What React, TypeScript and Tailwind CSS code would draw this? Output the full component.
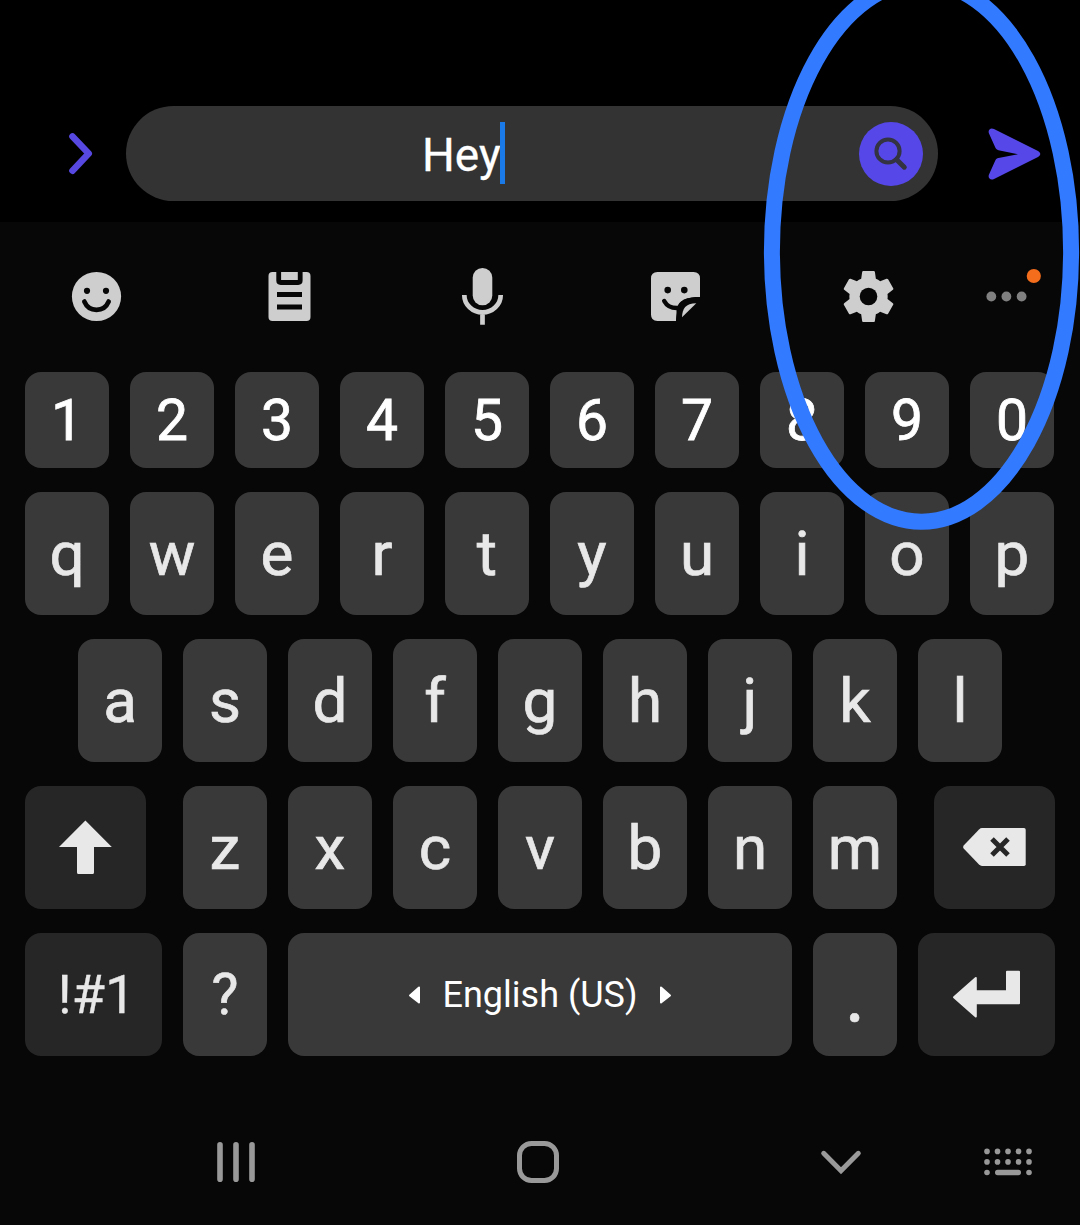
import type { ReactNode } from 'react';

const KEY = 'flex w-[84px] items-center justify-center rounded-2xl bg-[#393939] text-[#e8e8e8]';
const DARK = 'flex items-center justify-center rounded-2xl bg-[#262626] text-[#e8e8e8]';
const LETTER = 'pb-px text-[62px] [-webkit-text-stroke:0.7px_#e8e8e8]';

function Letters({ chars, className }: { chars: string; className: string }) {
  return (
    <>
      {chars.split('').map((c) => (
        <div key={c} className={`${KEY} ${className}`}>
          {c}
        </div>
      ))}
    </>
  );
}

function Tool({ x, children }: { x: number; children: ReactNode }) {
  return (
    <div className="flex w-[193px] justify-center">
      <svg width="65" height="64" viewBox={`${x - 32.5} 265 65 64`} className="text-[#cecece]" fill="currentColor">
        {children}
      </svg>
    </div>
  );
}

function Header() {
  return (
    <header className="flex h-[222px] items-start bg-black pt-[106px]">
      <svg width="126" height="95" viewBox="0 106 126 95" fill="none">
        <path d="M72.5 136.5L88.7 153.5L72.5 170.7" stroke="#5648e0" strokeWidth="6.6" strokeLinecap="round" strokeLinejoin="round" />
      </svg>
      <div className="flex h-[95px] w-[812px] items-center rounded-full bg-[#333333] pr-[15px]">
        <div className="flex flex-1 items-center pl-[296px]">
          <span className="mt-[3px] w-[78px] text-[46px] leading-[54px] text-white [-webkit-text-stroke:0.3px_#ffffff]">Hey</span>
          <span className="mb-px h-[62px] w-[5px] bg-[#1a7ae8]" />
        </div>
        <div className="mt-px h-16 w-16 rounded-full bg-[#5648e8]">
          <svg width="64" height="64" viewBox="859 122 64 64" fill="none" stroke="#333341">
            <circle cx="888" cy="151" r="11.6" strokeWidth="4" />
            <path d="M896.5 159.5L904.3 167.2" strokeWidth="5" strokeLinecap="round" />
          </svg>
        </div>
      </div>
      <svg width="142" height="95" viewBox="938 106 142 95">
        <path
          d="M989 133.5C987.5 130 990.5 127.3 994 129L1038 151C1041 152.6 1041 155.4 1038 157L994 179C990.5 180.8 987.5 178 989 174.5L995.3 160.5C996 159 997 158.2 998.5 157.9L1018 154.2L998.5 150.2C997 149.9 996 149 995.3 147.5Z"
          fill="#5648e8"
        />
      </svg>
    </header>
  );
}

function Toolbar() {
  return (
    <div className="flex h-[150px] items-center">
      <Tool x={96.5}>
        <circle cx="96.5" cy="296.5" r="24.6" />
        <circle cx="87" cy="290.8" r="3.1" fill="#070707" />
        <circle cx="106" cy="290.8" r="3.1" fill="#070707" />
        <path d="M84.3 301.5C89 312.6 104 312.6 108.7 301.5" fill="none" stroke="#070707" strokeWidth="4.6" strokeLinecap="round" />
      </Tool>
      <Tool x={289.5}>
        <rect x="268.5" y="272" width="42" height="49" rx="4" />
        <path d="M278.7 271V280.5Q278.7 282.5 280.7 282.5H298.2Q300.2 282.5 300.2 280.5V271" fill="none" stroke="#070707" strokeWidth="4.8" />
        <path d="M277 294.5H302M277 307H302" stroke="#070707" strokeWidth="5.2" />
      </Tool>
      <Tool x={482.5}>
        <rect x="472.7" y="268" width="19.6" height="37.3" rx="9.8" />
        <path d="M464.3 295A18.2 17.4 0 0 0 500.7 295M482.5 312V324.7" fill="none" stroke="currentColor" strokeWidth="4.7" />
      </Tool>
      <Tool x={675.5}>
        <path d="M657.5 272H693.5Q700 272 700 278.5V297C688 297 676.5 299 676.5 313L676 321H657.5Q651 321 651 314.5V278.5Q651 272 657.5 272Z" />
        <path d="M700 297.2C688 297.2 678.8 299.5 677.5 309L676 321H681L700 302Z" fill="#070707" />
        <path d="M696.3 303.3L682 317.3C682.3 308.5 685.5 303.6 696.3 303.3Z" />
        <circle cx="667.7" cy="290.1" r="3.3" fill="#070707" />
        <circle cx="684.3" cy="290.1" r="3.3" fill="#070707" />
        <path d="M664.2 301C667 306.3 672 308.3 678 308" fill="none" stroke="#070707" strokeWidth="4.4" strokeLinecap="round" />
      </Tool>
      <Tool x={868.5}>
        <path
          transform="translate(836.6 264.6) scale(2.66)"
          d="M19.14 12.94c.04-.3.06-.61.06-.94 0-.32-.02-.64-.07-.94l2.03-1.58c.18-.14.23-.41.12-.61l-1.92-3.32c-.12-.22-.37-.29-.59-.22l-2.39.96c-.5-.38-1.03-.7-1.62-.94l-.36-2.54c-.04-.24-.24-.41-.48-.41h-3.84c-.24 0-.43.17-.47.41l-.36 2.54c-.59.24-1.13.57-1.62.94l-2.39-.96c-.22-.08-.47 0-.59.22L2.74 8.87c-.12.21-.08.47.12.61l2.03 1.58c-.05.3-.09.63-.09.94s.02.64.07.94l-2.03 1.58c-.18.14-.23.41-.12.61l1.92 3.32c.12.22.37.29.59.22l2.39-.96c.5.38 1.03.7 1.62.94l.36 2.54c.05.24.24.41.48.41h3.84c.24 0 .44-.17.47-.41l.36-2.54c.59-.24 1.13-.56 1.62-.94l2.39.96c.22.08.47 0 .59-.22l1.92-3.32c.12-.22.07-.47-.12-.61l-2.01-1.58z"
        />
        <circle cx="868.5" cy="296.5" r="8.8" fill="#070707" />
      </Tool>
      <svg width="83" height="64" viewBox="965 265 83 64" fill="#808080">
        <circle cx="991.3" cy="296.5" r="4.9" />
        <circle cx="1006.4" cy="296.5" r="4.9" />
        <circle cx="1021.6" cy="296.5" r="4.9" />
        <circle cx="1033.8" cy="276" r="7.1" fill="#f36d1c" />
      </svg>
    </div>
  );
}

function Keyboard() {
  return (
    <div className="flex flex-col gap-6 px-[25px]">
      <div className="flex h-24 gap-[21px]">
        <Letters chars="1234567890" className="pt-[2px] text-[57px] text-white [-webkit-text-stroke:0.8px_#ffffff]" />
      </div>
      <div className="flex h-[123px] gap-[21px]">
        <Letters chars="qwertyuiop" className={LETTER} />
      </div>
      <div className="flex h-[123px] gap-[21px] pl-[53px]">
        <Letters chars="asdfghjkl" className={LETTER} />
      </div>
      <div className="flex h-[123px] justify-between">
        <div className={`${DARK} w-[121px]`}>
          <svg width="121" height="123" viewBox="25 786 121 123" fill="currentColor">
            <path d="M85.4 820.5L111.8 847H94V872.5Q94 874 92.5 874H78.5Q77 874 77 872.5V847H59Z" />
          </svg>
        </div>
        <div className="flex gap-[21px]">
          <Letters chars="zxcvbnm" className={LETTER} />
        </div>
        <div className={`${DARK} w-[121px]`}>
          <svg width="121" height="123" viewBox="934 786 121 123" fill="currentColor">
            <path d="M982 828H1024Q1025.7 828 1025.7 829.7V864.3Q1025.7 866 1024 866H982Q980.5 866 979 864.6L963.9 848.8Q962.4 847 963.9 845.2L979 829.4Q980.5 828 982 828Z" />
            <path d="M992 839L1008 855M1008 839L992 855" stroke="#262626" strokeWidth="5" />
          </svg>
        </div>
      </div>
      <div className="flex h-[123px] gap-[21px]">
        <div className={`${DARK} w-[137px] pl-[6px] text-[54px] [-webkit-text-stroke:0.3px_#e8e8e8]`}>!#1</div>
        <div className={`${KEY} text-[57px] [-webkit-text-stroke:0.6px_#e8e8e8]`}>?</div>
        <div className="flex w-[504px] items-center justify-center gap-[23px] rounded-2xl bg-[#393939] text-white">
          <svg width="12" height="20" viewBox="0 0 12 20" fill="currentColor" stroke="currentColor" strokeWidth="2" strokeLinejoin="round">
            <path d="M11 2.5V17.5L2 10.5Z" />
          </svg>
          <span className="pt-px text-[36px]">English (US)</span>
          <svg width="12" height="20" viewBox="0 0 12 20" fill="currentColor" stroke="currentColor" strokeWidth="2" strokeLinejoin="round">
            <path d="M1 2.5V17.5L10 10.5Z" />
          </svg>
        </div>
        <div className={`${KEY} text-[80px] [-webkit-text-stroke:0.5px_#e8e8e8]`}>.</div>
        <div className={`${DARK} w-[137px]`}>
          <svg width="137" height="123" viewBox="918 933 137 123" fill="currentColor" stroke="currentColor" strokeWidth="2" strokeLinejoin="round">
            <path d="M954 997.3L975.8 978V991.3H1007V971.7H1019V1003.3H975.8V1016.5Z" />
          </svg>
        </div>
      </div>
    </div>
  );
}

function NavBar() {
  const cols = [987, 997.5, 1008, 1018.5, 1029];
  return (
    <nav className="flex pl-[204px] pt-[74px] text-[#999999]">
      <svg width="64" height="64" viewBox="204 1130 64 64" stroke="currentColor" strokeWidth="5.6" strokeLinecap="round">
        <path d="M220 1144.8V1179.2M236 1144.8V1179.2M252 1144.8V1179.2" />
      </svg>
      <svg className="ml-[238px]" width="64" height="64" viewBox="506 1130 64 64" fill="none" stroke="currentColor" strokeWidth="5">
        <rect x="519.5" y="1143.5" width="37" height="37" rx="12" />
      </svg>
      <svg className="ml-[239px]" width="64" height="64" viewBox="809 1130 64 64" fill="none" stroke="currentColor" strokeWidth="5" strokeLinecap="round">
        <path d="M823.7 1153.3L841 1170.8L858.3 1153.3" />
      </svg>
      <svg className="ml-[103px]" width="64" height="64" viewBox="976 1130 64 64" fill="currentColor">
        {cols.map((x) => (
          <g key={x}>
            <circle cx={x} cy="1151.4" r="2.8" />
            <circle cx={x} cy="1161.9" r="2.8" />
          </g>
        ))}
        <circle cx="987" cy="1172.5" r="2.8" />
        <rect x="995" y="1169.8" width="26" height="5.4" rx="2.7" />
        <circle cx="1029" cy="1172.5" r="2.8" />
      </svg>
    </nav>
  );
}

export default function App() {
  return (
    <div className="relative h-[1225px] w-[1080px] overflow-hidden bg-[#070707] font-['Roboto',sans-serif]">
      <Header />
      <Toolbar />
      <Keyboard />
      <NavBar />
      <svg className="pointer-events-none absolute right-0 top-0" width="320" height="540" viewBox="760 0 320 540" fill="none">
        <ellipse cx="921.5" cy="251.6" rx="149.6" ry="270.1" stroke="#327aff" strokeWidth="16" />
      </svg>
    </div>
  );
}
